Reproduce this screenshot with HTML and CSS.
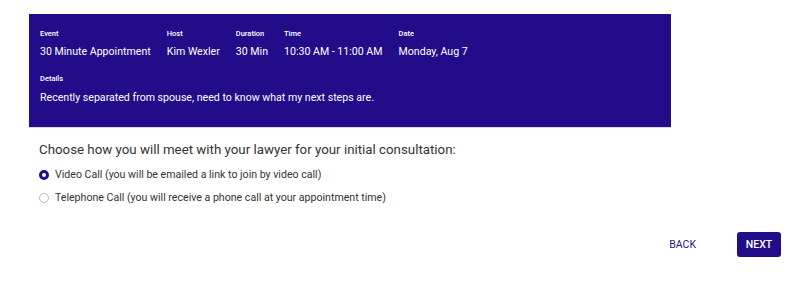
FILE: index.html
```html
<!DOCTYPE html>
<html>
  <head>
    <title>Appointment</title>
    <link rel="stylesheet" href="styles.css">
  </head>
  <body>
    <div class="resumo">
      <div class="linha">
        <div class="campo">
          <div class="rotulo">Event</div>
          <div class="valor">30 Minute Appointment</div>
        </div>
        <div class="campo">
          <div class="rotulo">Host</div>
          <div class="valor">Kim Wexler</div>
        </div>
        <div class="campo">
          <div class="rotulo">Duration</div>
          <div class="valor">30 Min</div>
        </div>
        <div class="campo">
          <div class="rotulo">Time</div>
          <div class="valor">10:30 AM - 11:00 AM</div>
        </div>
        <div class="campo">
          <div class="rotulo">Date</div>
          <div class="valor">Monday, Aug 7</div>
        </div>
      </div>
      <div class="campo detalhes">
        <div class="rotulo">Details</div>
        <div class="valor">Recently separated from spouse, need to know what my next steps are.</div>
      </div>
    </div>
    <form class="escolha">
      <p class="pergunta">Choose how you will meet with your lawyer for your initial consultation:</p>
      <label class="opcao">
        <input type="radio" name="meio" value="video" checked>
        <span>Video Call (you will be emailed a link to join by video call)</span>
      </label>
      <label class="opcao">
        <input type="radio" name="meio" value="telefone">
        <span>Telephone Call (you will receive a phone call at your appointment time)</span>
      </label>
    </form>
    <div class="acoes">
      <button class="btn-voltar" type="button">BACK</button>
      <button class="btn-proximo" type="button">NEXT</button>
    </div>
  </body>
</html>
```

FILE: styles.css
```css
body {
  margin: 0;
  padding: 14px 0 0 29px;
  background-color: #FFF;
  font-family: Roboto, Arial, sans-serif;
  color: #333;
}
.resumo {
  background-color: #220C89;
  width: 642px;
  height: 114px;
  box-sizing: border-box;
  padding: 14px 11px 0 11px;
  color: #FFF;
  border-bottom: 1px solid #D8D8E8;
}
.linha {
  display: flex;
  gap: 16px;
}
.rotulo {
  font-size: 7.5px;
  font-weight: 500;
  line-height: 12px;
}
.valor {
  font-size: 10.6px;
  line-height: 15px;
  margin-top: 4px;
}
.detalhes {
  margin-top: 14px;
}
.detalhes .valor {
  margin-top: 5px;
}
.escolha {
  padding-left: 10px;
  margin: 0;
}
.pergunta {
  font-size: 13.3px;
  margin: 13px 0 5px 0;
  line-height: 17px;
  color: #333;
}
.opcao {
  display: flex;
  align-items: center;
  gap: 6px;
  font-size: 10.6px;
  height: 23px;
  color: #333;
}
.opcao input {
  appearance: none;
  margin: 0;
  width: 10px;
  height: 10px;
  border-radius: 50%;
  border: 1px solid #BBB;
  box-sizing: border-box;
}
.opcao input:checked {
  border: 3px solid #220C89;
  background-color: #FFF;
}
.acoes {
  display: flex;
  justify-content: flex-end;
  align-items: center;
  gap: 41px;
  margin-top: 23px;
  padding-right: 17px;
}
.btn-voltar {
  background: none;
  border: none;
  color: #2E1483;
  font-family: Roboto, Arial, sans-serif;
  font-size: 10.5px;
  padding: 6px 0;
  cursor: pointer;
}
.btn-proximo {
  background-color: #220C89;
  border: none;
  color: #FFF;
  font-family: Roboto, Arial, sans-serif;
  font-size: 10.5px;
  font-weight: 500;
  width: 44px;
  height: 25px;
  border-radius: 3px;
  cursor: pointer;
}
```
